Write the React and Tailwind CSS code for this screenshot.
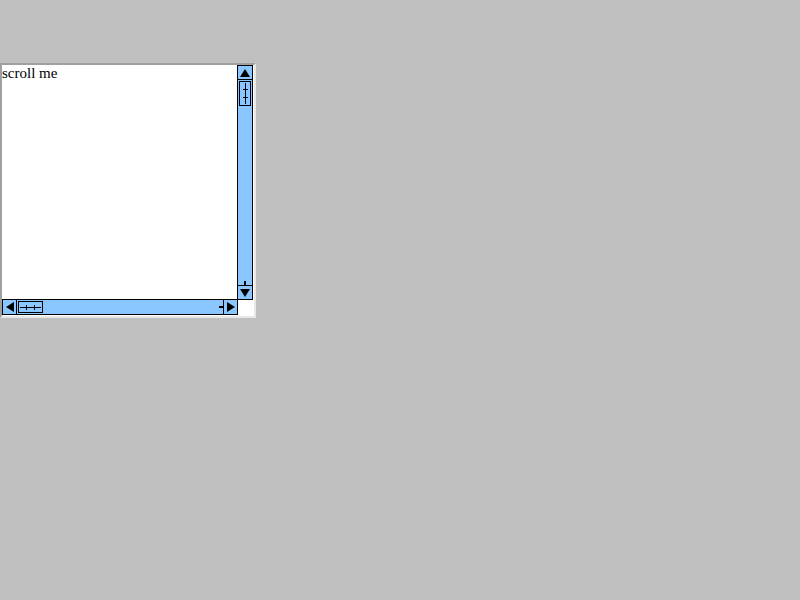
const Arrow = ({ dir }) => {
  const pts = {
    up: "5,1 10,9 0,9",
    down: "0,1 10,1 5,9",
    left: "9,0 9,10 1,5",
    right: "1,0 1,10 9,5",
  };
  return (
    <svg width="10" height="10" viewBox="0 0 10 10" className="block">
      <polygon points={pts[dir]} fill="#000" />
    </svg>
  );
};

const VScrollbar = () => (
  <div className="w-[16px] h-full flex flex-col bg-[#8ac6ff] border-x border-black">
    <div className="h-[15px] border-y border-black flex items-center justify-center">
      <Arrow dir="up" />
    </div>
    <div className="mx-[1px] mt-[1px] h-[25px] border border-black flex justify-center">
      <svg width="7" height="23" viewBox="0 0 7 23" className="block">
        <line x1="3.5" y1="1" x2="3.5" y2="22" stroke="#000" />
        <line x1="1" y1="7.5" x2="6" y2="7.5" stroke="#000" />
        <line x1="1" y1="15.5" x2="6" y2="15.5" stroke="#000" />
      </svg>
    </div>
    <div className="flex-1 flex flex-col justify-end items-center">
      <div className="w-[2px] h-[4px] bg-black" />
    </div>
    <div className="h-[15px] border-y border-black flex items-center justify-center">
      <Arrow dir="down" />
    </div>
  </div>
);

const HScrollbar = () => (
  <div className="h-[16px] w-full flex bg-[#8ac6ff] border-y border-black">
    <div className="w-[15px] border-x border-black flex items-center justify-center">
      <Arrow dir="left" />
    </div>
    <div className="my-[1px] ml-[1px] w-[25px] border border-black flex items-center">
      <svg width="23" height="7" viewBox="0 0 23 7" className="block">
        <line x1="1" y1="3.5" x2="22" y2="3.5" stroke="#000" />
        <line x1="7.5" y1="1" x2="7.5" y2="6" stroke="#000" />
        <line x1="15.5" y1="1" x2="15.5" y2="6" stroke="#000" />
      </svg>
    </div>
    <div className="flex-1 flex justify-end items-center">
      <div className="w-[4px] h-[2px] bg-black" />
    </div>
    <div className="w-[15px] border-x border-black flex items-center justify-center">
      <Arrow dir="right" />
    </div>
  </div>
);

export default function App() {
  return (
    <div className="w-[800px] h-[600px] bg-[#c0c0c0] pt-[63px]">
      <div className="w-[256px] h-[255px] border-2 border-t-[#a0a0a0] border-l-[#a0a0a0] border-r-[#e8e8e8] border-b-[#e8e8e8] bg-white">
        <div className="grid grid-cols-[236px_16px] grid-rows-[235px_16px] h-full">
          <div className="font-['Liberation_Serif',serif] text-[15px] leading-[17px] text-black">
            scroll me
          </div>
          <div className="-ml-[1px]">
            <VScrollbar />
          </div>
          <div className="-mt-[1px]">
            <HScrollbar />
          </div>
          <div className="bg-white" />
        </div>
      </div>
    </div>
  );
}
